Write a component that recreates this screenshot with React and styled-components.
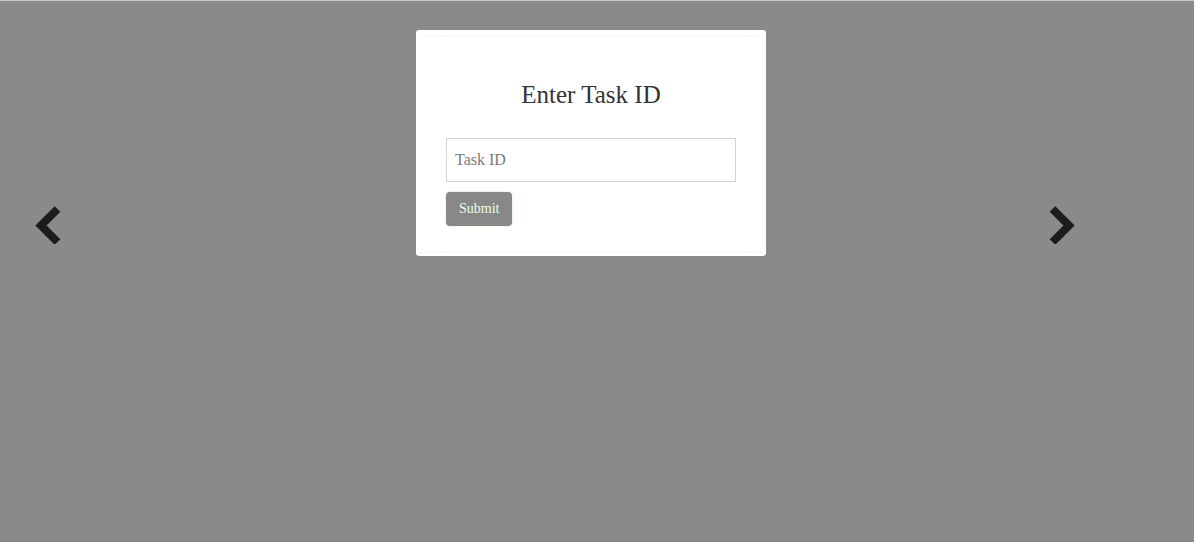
import React from 'react';
import styled, { createGlobalStyle } from 'styled-components';

const GlobalStyle = createGlobalStyle`
  html, body {
    margin: 0;
    padding: 0;
    background-color: #8a8a8a;
    font-family: "Liberation Serif", "Times New Roman", serif;
  }
`;

const Page = styled.div`
  box-sizing: border-box;
  height: 542px;
  border-top: 1px solid #c9c9c9;
  background-color: #8a8a8a;
  overflow: hidden;
`;

const Stage = styled.div`
  display: flex;
  align-items: flex-start;
  padding-top: 29px;
`;

const NavButton = styled.button`
  display: block;
  width: 26px;
  height: 38px;
  padding: 0;
  border: 0;
  background: transparent;
  cursor: pointer;
  margin-top: ${(p) => p.$top}px;
  margin-left: ${(p) => p.$left}px;
  color: #1c1c1c;

  svg {
    display: block;
  }
`;

const Modal = styled.div`
  width: 350px;
  margin-left: 355px;
  background-color: #fff;
  border-radius: 3px;
  padding: 5px 4px 3px;
  box-sizing: border-box;
`;

const Form = styled.form`
  display: flex;
  flex-direction: column;
  align-items: flex-start;
  padding: 1px 26px 26px;
  border-top: 1px dashed #f1f1f1;
  border-bottom: 1px dashed #f1f1f1;
`;

const Title = styled.h3`
  align-self: stretch;
  margin: 43px 0 0;
  font-size: 25px;
  line-height: 29px;
  font-weight: normal;
  color: #333;
  text-align: center;
`;

const Input = styled.input`
  box-sizing: border-box;
  width: 290px;
  height: 44px;
  margin-top: 29px;
  padding: 0 8px;
  border: 1px solid #d3d3d3;
  font-family: inherit;
  font-size: 16px;
  color: #333;
  outline: none;

  &::placeholder {
    color: #7a7a7a;
  }
`;

const SubmitButton = styled.button`
  box-sizing: border-box;
  height: 34px;
  margin-top: 10px;
  padding: 0 13px;
  background-color: #888;
  color: #ecffe8;
  border: 0;
  border-radius: 4px;
  box-shadow: 0 0 0 1px #eaf8e6;
  font-family: inherit;
  font-size: 14px;
  cursor: pointer;
`;

const Chevron = ({ dir }) => (
  <svg width="26" height="38" viewBox="0 0 26 38">
    <polyline
      points={dir === 'left' ? '22.5,3 6,19.5 22.5,36' : '3.5,3 20,19.5 3.5,36'}
      fill="none"
      stroke="currentColor"
      strokeWidth="8"
      strokeLinecap="butt"
      strokeLinejoin="miter"
    />
  </svg>
);

const App = () => (
  <Page>
    <GlobalStyle />
    <Stage>
      <NavButton $left={35} $top={176} aria-label="Previous">
        <Chevron dir="left" />
      </NavButton>
      <Modal>
        <Form onSubmit={(e) => e.preventDefault()}>
          <Title>Enter Task ID</Title>
          <Input placeholder="Task ID" />
          <SubmitButton type="submit">Submit</SubmitButton>
        </Form>
      </Modal>
      <NavButton $left={283} $top={176} aria-label="Next">
        <Chevron dir="right" />
      </NavButton>
    </Stage>
  </Page>
);

export default App;
